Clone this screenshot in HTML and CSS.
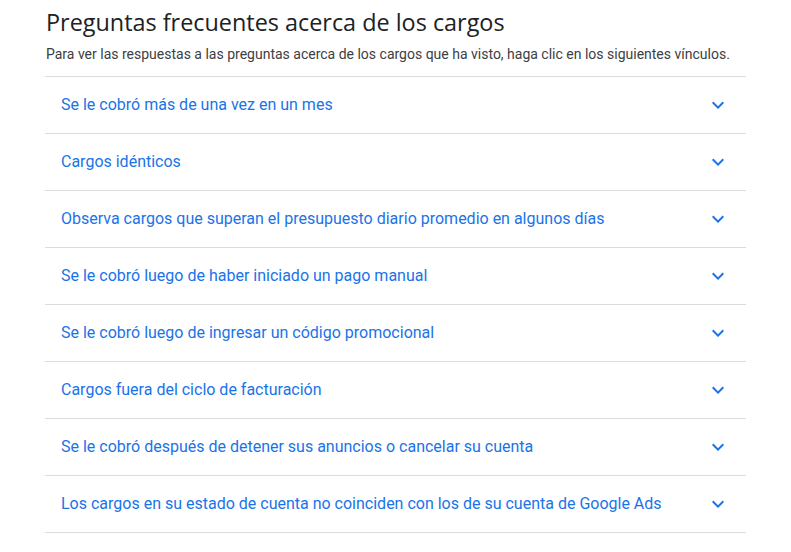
FILE: index.html
```html
<!DOCTYPE html>
<html lang="es">
<head>
<meta charset="utf-8">
<link rel="stylesheet" href="styles.css">
</head>
<body>
<div class="page">
  <h1 class="title">Preguntas frecuentes acerca de los cargos</h1>
  <p class="intro">Para ver las respuestas a las preguntas acerca de los cargos que ha visto, haga clic en los siguientes vínculos.</p>
  <ul class="faq">
    <li class="item"><span class="q">Se le cobró más de una vez en un mes</span><svg class="chev" viewBox="0 0 24 24"><path d="M16.59 8.59L12 13.17 7.41 8.59 6 10l6 6 6-6z"/></svg></li>
    <li class="item"><span class="q">Cargos idénticos</span><svg class="chev" viewBox="0 0 24 24"><path d="M16.59 8.59L12 13.17 7.41 8.59 6 10l6 6 6-6z"/></svg></li>
    <li class="item"><span class="q">Observa cargos que superan el presupuesto diario promedio en algunos días</span><svg class="chev" viewBox="0 0 24 24"><path d="M16.59 8.59L12 13.17 7.41 8.59 6 10l6 6 6-6z"/></svg></li>
    <li class="item"><span class="q">Se le cobró luego de haber iniciado un pago manual</span><svg class="chev" viewBox="0 0 24 24"><path d="M16.59 8.59L12 13.17 7.41 8.59 6 10l6 6 6-6z"/></svg></li>
    <li class="item"><span class="q">Se le cobró luego de ingresar un código promocional</span><svg class="chev" viewBox="0 0 24 24"><path d="M16.59 8.59L12 13.17 7.41 8.59 6 10l6 6 6-6z"/></svg></li>
    <li class="item"><span class="q">Cargos fuera del ciclo de facturación</span><svg class="chev" viewBox="0 0 24 24"><path d="M16.59 8.59L12 13.17 7.41 8.59 6 10l6 6 6-6z"/></svg></li>
    <li class="item"><span class="q">Se le cobró después de detener sus anuncios o cancelar su cuenta</span><svg class="chev" viewBox="0 0 24 24"><path d="M16.59 8.59L12 13.17 7.41 8.59 6 10l6 6 6-6z"/></svg></li>
    <li class="item"><span class="q">Los cargos en su estado de cuenta no coinciden con los de su cuenta de Google Ads</span><svg class="chev" viewBox="0 0 24 24"><path d="M16.59 8.59L12 13.17 7.41 8.59 6 10l6 6 6-6z"/></svg></li>
  </ul>
</div>
</body>
</html>
```
FILE: styles.css
```css
html, body {
  margin: 0;
  padding: 0;
  background: #fff;
}
.page {
  width: 701px;
  margin-left: 45px;
  font-family: Roboto, "Liberation Sans", sans-serif;
}
.title {
  margin: 0;
  padding: 6px 0 0 1px;
  font-family: "Open Sans", Roboto, sans-serif;
  font-weight: 400;
  font-size: 23.4px;
  line-height: 32px;
  color: #202124;
}
.intro {
  margin: 6px 0 0 1px;
  font-size: 14px;
  line-height: 20px;
  color: #3c4043;
}
.faq {
  list-style: none;
  margin: 12px 0 0;
  padding: 0;
  border-top: 1px solid #dadce0;
}
.item {
  display: flex;
  align-items: center;
  justify-content: space-between;
  height: 56px;
  padding: 0 16px;
  border-bottom: 1px solid #dadce0;
}
.q {
  font-size: 16px;
  line-height: 20px;
  color: #1a73e8;
}
.chev {
  width: 24px;
  height: 24px;
  fill: #1a73e8;
  flex: none;
}
```
